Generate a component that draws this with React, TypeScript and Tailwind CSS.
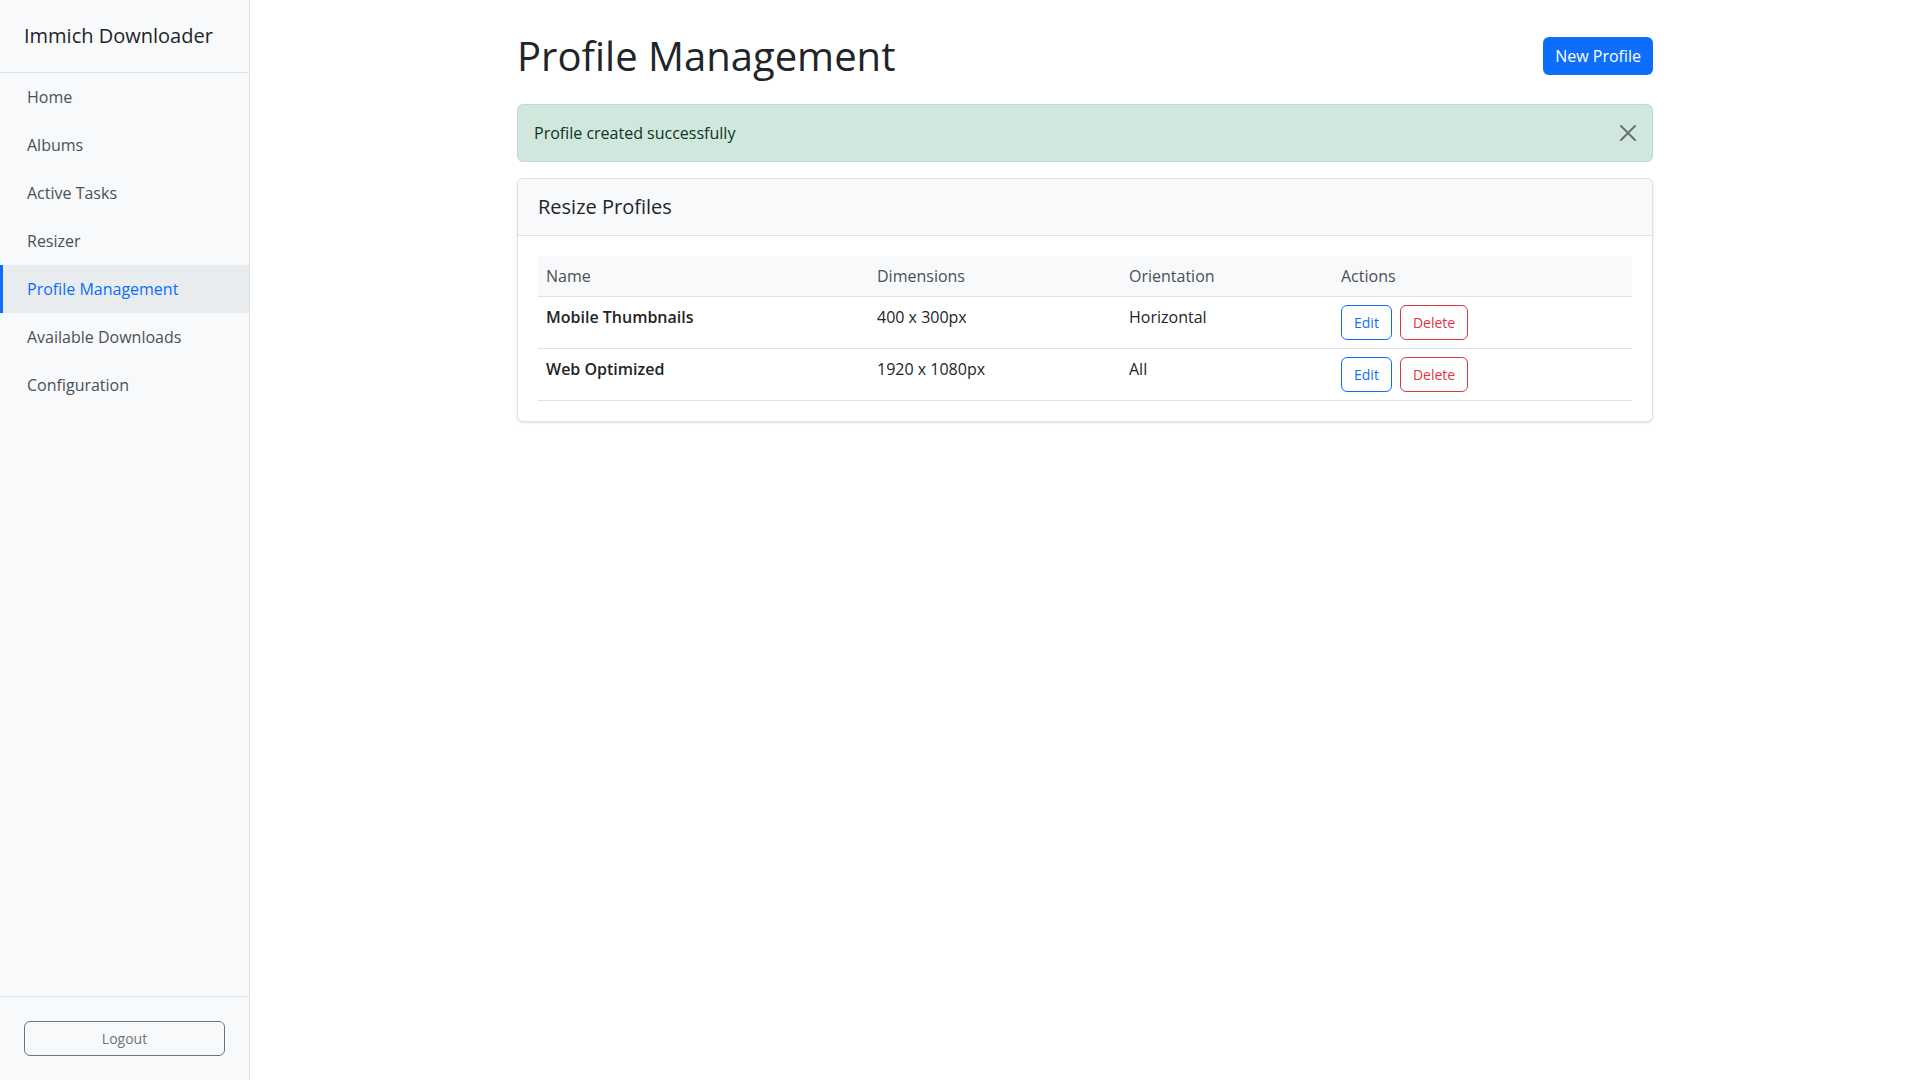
import React from 'react';

const navItems = [
  'Home',
  'Albums',
  'Active Tasks',
  'Resizer',
  'Profile Management',
  'Available Downloads',
  'Configuration',
];

const profiles = [
  { name: 'Mobile Thumbnails', dims: '400 x 300px', orientation: 'Horizontal' },
  { name: 'Web Optimized', dims: '1920 x 1080px', orientation: 'All' },
];

const Sidebar: React.FC = () => (
  <aside className="w-[250px] h-screen shrink-0 flex flex-col bg-[#f8f9fa] border-r border-[#dee2e6]">
    <div className="h-[73px] px-6 flex items-center border-b border-[#dee2e6]">
      <span className="text-[20px] leading-[24px] text-[#212529]">Immich Downloader</span>
    </div>
    <nav className="flex flex-col">
      {navItems.map((item) => {
        const active = item === 'Profile Management';
        return (
          <a
            key={item}
            href="#"
            className={
              active
                ? 'h-12 flex items-center pl-6 border-l-[3px] border-[#0d6efd] bg-[#e9ecef] text-[#0d6efd]'
                : 'h-12 flex items-center pl-6 border-l-[3px] border-transparent text-[#495057]'
            }
          >
            {item}
          </a>
        );
      })}
    </nav>
    {/* Logout */}
    <div className="mt-auto p-6 border-t border-[#dee2e6]">
      <button className="w-full h-[35px] text-sm text-[#6c757d] border border-[#6c757d] rounded-md">
        Logout
      </button>
    </div>
  </aside>
);

export default function App() {
  return (
    <div className="flex min-h-screen bg-white text-base text-[#212529] font-['Open_Sans',sans-serif]">
      <Sidebar />
      <main className="flex-1">
        <div className="w-[1136px] mx-auto pt-8">
          {/* Page header */}
          <div className="h-12 flex items-center justify-between mb-6">
            <h1 className="text-[40px] leading-[48px] font-medium text-[#212529]">Profile Management</h1>
            <button className="h-[38px] px-3 rounded-md bg-[#0d6efd] text-white">New Profile</button>
          </div>

          {/* Success alert */}
          <div className="h-[58px] mb-4 px-4 flex items-center justify-between bg-[#d1e7dd] border border-[#badbcc] rounded-md text-[#0a3622]">
            <span>Profile created successfully</span>
            <button className="opacity-50" aria-label="Close">
              <svg width="16" height="16" viewBox="0 0 16 16" fill="#000">
                <path d="M.293.293a1 1 0 0 1 1.414 0L8 6.586 14.293.293a1 1 0 1 1 1.414 1.414L9.414 8l6.293 6.293a1 1 0 0 1-1.414 1.414L8 9.414l-6.293 6.293a1 1 0 0 1-1.414-1.414L6.586 8 .293 1.707a1 1 0 0 1 0-1.414z" />
              </svg>
            </button>
          </div>

          {/* Profiles card */}
          <div className="bg-white border border-[#dee2e6] rounded-md shadow-sm">
            <div className="px-5 py-4 bg-[#f8f9fa] border-b border-[#dee2e6] rounded-t-md">
              <h5 className="text-[20px] leading-[24px] font-medium">Resize Profiles</h5>
            </div>
            <div className="p-5">
              <table className="w-full table-fixed border-collapse">
                <thead>
                  <tr className="bg-[#f8f9fa]">
                    <th className="w-[331px] px-2 py-2 text-left font-normal text-[#495057] border-b border-[#dee2e6]">Name</th>
                    <th className="w-[252px] px-2 py-2 text-left font-normal text-[#495057] border-b border-[#dee2e6]">Dimensions</th>
                    <th className="w-[212px] px-2 py-2 text-left font-normal text-[#495057] border-b border-[#dee2e6]">Orientation</th>
                    <th className="px-2 py-2 text-left font-normal text-[#495057] border-b border-[#dee2e6]">Actions</th>
                  </tr>
                </thead>
                <tbody>
                  {profiles.map((p) => (
                    <tr key={p.name}>
                      <td className="px-2 py-2 align-top font-semibold border-b border-[#dee2e6]">{p.name}</td>
                      <td className="px-2 py-2 align-top border-b border-[#dee2e6]">{p.dims}</td>
                      <td className="px-2 py-2 align-top border-b border-[#dee2e6]">{p.orientation}</td>
                      <td className="px-2 py-2 align-top border-b border-[#dee2e6]">
                        <div className="flex gap-2">
                          <button className="h-[35px] px-3 text-sm text-[#0d6efd] border border-[#0d6efd] rounded-md">Edit</button>
                          <button className="h-[35px] px-3 text-sm text-[#dc3545] border border-[#dc3545] rounded-md">Delete</button>
                        </div>
                      </td>
                    </tr>
                  ))}
                </tbody>
              </table>
            </div>
          </div>
        </div>
      </main>
    </div>
  );
}
